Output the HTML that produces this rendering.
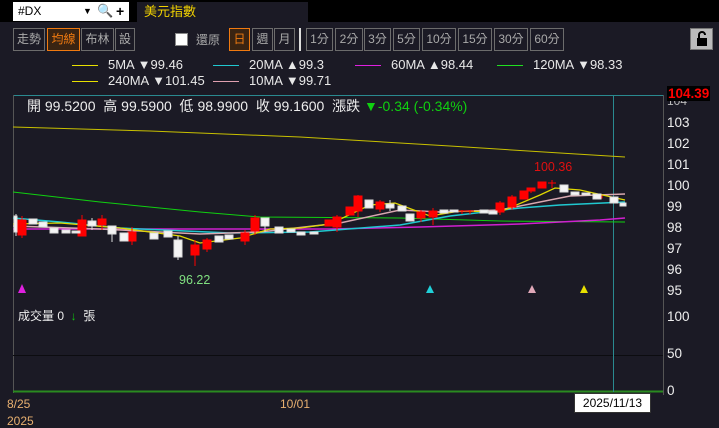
<!DOCTYPE html>
<html><head><meta charset="utf-8"><style>
*{margin:0;padding:0;box-sizing:border-box}
body{width:719px;height:426px;background:#1b1a25;font-family:"Liberation Sans","Noto Sans CJK TC",sans-serif;position:relative;overflow:hidden;color:#ddd}
.a{position:absolute}
.btn{position:absolute;top:28px;height:23px;border:1px solid #6c6c6c;color:#aaa;font-size:12px;line-height:21px;text-align:center}
.on{border-color:#f07a10;background:#3a2412;color:#f07a10}
.lg{position:absolute;font-size:13px;color:#e8e8e8;white-space:nowrap}
.ln{display:inline-block;width:26px;height:1px;vertical-align:middle;margin-right:10px}
.ax{position:absolute;left:667px;font-size:13.5px;color:#eee}
</style></head><body>
<div class="a" style="left:0;top:0;width:719px;height:22px;background:#000"></div>
<div class="a" style="left:13px;top:2px;width:116px;height:19px;background:#fff;color:#000;font-size:12px;line-height:19px;padding-left:5px">#DX<span style="position:absolute;left:70px;font-size:9px">▼</span><span style="position:absolute;left:84px;top:-1px;font-size:13px">🔍</span><span style="position:absolute;left:103px;font-weight:bold;font-size:14px">+</span></div>
<div class="a" style="left:137px;top:2px;width:171px;height:20px;background:#1b1a25;color:#f2d200;font-size:13px;line-height:20px;padding-left:7px">美元指數</div>

<div class="btn" style="left:13px;width:32px">走勢</div>
<div class="btn on" style="left:47px;width:33px">均線</div>
<div class="btn" style="left:81px;width:33px">布林</div>
<div class="btn" style="left:115px;width:20px">設</div>
<div class="a" style="left:175px;top:33px;width:13px;height:13px;background:#fff;border:1px solid #888"></div>
<div class="a" style="left:196px;top:31px;font-size:12px;color:#aaa">還原</div>
<div class="btn on" style="left:229px;width:21px">日</div>
<div class="btn" style="left:252px;width:21px">週</div>
<div class="btn" style="left:274px;width:21px">月</div>
<div class="a" style="left:299px;top:28px;width:2px;height:23px;background:#ddd"></div>
<div class="btn" style="left:306px;width:27px">1分</div>
<div class="btn" style="left:335px;width:28px">2分</div>
<div class="btn" style="left:364px;width:27px">3分</div>
<div class="btn" style="left:393px;width:27px">5分</div>
<div class="btn" style="left:422px;width:34px">10分</div>
<div class="btn" style="left:458px;width:34px">15分</div>
<div class="btn" style="left:494px;width:34px">30分</div>
<div class="btn" style="left:530px;width:34px">60分</div>
<div class="a" style="left:690px;top:28px;width:23px;height:22px;background:#bbb;border:1px solid #777"><svg width="21" height="20"><rect x="6" y="9" width="10" height="8" fill="#000"/><path d="M8 9V6a3 3 0 0 1 6 0" stroke="#000" stroke-width="2" fill="none"/></svg></div>

<div class="lg" style="left:72px;top:57px"><span class="ln" style="background:#e8e000"></span>5MA ▼99.46</div>
<div class="lg" style="left:213px;top:57px"><span class="ln" style="background:#20c8d0"></span>20MA ▲99.3</div>
<div class="lg" style="left:355px;top:57px"><span class="ln" style="background:#e020e0"></span>60MA ▲98.44</div>
<div class="lg" style="left:497px;top:57px"><span class="ln" style="background:#20e020"></span>120MA ▼98.33</div>
<div class="lg" style="left:72px;top:73px"><span class="ln" style="background:#e8e000"></span>240MA ▼101.45</div>
<div class="lg" style="left:213px;top:73px"><span class="ln" style="background:#e0a0b0"></span>10MA ▼99.71</div>

<svg class="a" style="left:0;top:0" width="719" height="426">
<line x1="13" y1="95.5" x2="663" y2="95.5" stroke="#2a8a90"/>
<line x1="13.5" y1="95" x2="13.5" y2="393" stroke="#555"/>
<line x1="663.5" y1="95" x2="663.5" y2="395" stroke="#555"/>
<line x1="13" y1="355.5" x2="663" y2="355.5" stroke="#0c0c10"/>
<line x1="13" y1="391.5" x2="663" y2="391.5" stroke="#2a8a20" stroke-width="2"/>
<line x1="613.5" y1="95" x2="613.5" y2="392" stroke="#2a8a90"/>
<path d="M13 127 L150 131 L300 137 L450 146 L560 153 L625 157" stroke="#c8c000" fill="none"/>
<path d="M13 192 L100 202 L200 212 L260 217 L400 218 L500 221 L625 222" stroke="#10d010" fill="none"/>
<path d="M13 229 L200 229 L330 229 L420 227 L520 224 L600 220 L625 218" stroke="#d020d0" fill="none" stroke-width="1.5"/>
<path d="M13 218 L60 222 L120 228 L230 233 L310 232 L400 225 L450 216 L520 208 L560 205 L625 202" stroke="#20c8d0" fill="none" stroke-width="1.5"/>
<path d="M13 226 L100 229 L200 234 L260 232 L340 223 L400 210 L440 212 L500 210 L570 196 L625 194" stroke="#d8a8b0" fill="none" stroke-width="1.5"/>
<path d="M13 224 L60 223 L120 228 L180 236 L200 243 L240 238 L270 229 L300 228 L330 224 L370 205 L395 203 L430 216 L460 211 L500 212 L540 195 L555 188 L580 190 L625 200" stroke="#e0d800" fill="none" stroke-width="1.3"/>
<g stroke-width="1">
<g fill="#f00" stroke="#f00">
<line x1="22" y1="216" x2="22" y2="238"/><rect x="18" y="220" width="8" height="15"/>
<line x1="82" y1="215" x2="82" y2="235"/><rect x="78" y="220" width="8" height="16"/>
<line x1="102" y1="215" x2="102" y2="230"/><rect x="98" y="219" width="8" height="6"/>
<line x1="132" y1="227" x2="132" y2="245"/><rect x="128" y="232" width="8" height="9"/>
<line x1="195" y1="240" x2="195" y2="266"/><rect x="191" y="245" width="8" height="10"/>
<line x1="207" y1="238" x2="207" y2="252"/><rect x="203" y="240" width="8" height="9"/>
<line x1="245" y1="230" x2="245" y2="245"/><rect x="241" y="233" width="8" height="8"/>
<line x1="255" y1="215" x2="255" y2="235"/><rect x="251" y="218" width="8" height="13"/>
<rect x="325" y="220" width="8" height="6"/>
<line x1="337" y1="215" x2="337" y2="232"/><rect x="333" y="217" width="8" height="10"/>
<rect x="346" y="207" width="8" height="8"/>
<line x1="358" y1="195" x2="358" y2="217"/><rect x="354" y="196" width="8" height="15"/>
<line x1="380" y1="200" x2="380" y2="212"/><rect x="376" y="202" width="8" height="7"/>
<line x1="421" y1="210" x2="421" y2="222"/><rect x="417" y="212" width="8" height="6"/>
<line x1="433" y1="208" x2="433" y2="225"/><rect x="429" y="211" width="8" height="6"/>
<line x1="462" y1="210" x2="462" y2="214"/><line x1="458" y1="211" x2="466" y2="211"/>
<line x1="470" y1="210" x2="470" y2="214"/><line x1="466" y1="211" x2="474" y2="211"/>
<line x1="500" y1="201" x2="500" y2="215"/><rect x="496" y="203" width="8" height="9"/>
<line x1="512" y1="195" x2="512" y2="210"/><rect x="508" y="197" width="8" height="10"/>
<rect x="520" y="191" width="8" height="8"/>
<line x1="531" y1="188" x2="531" y2="193"/><rect x="527" y="188" width="8" height="3"/>
<rect x="538" y="182" width="8" height="6"/>
<line x1="552" y1="180" x2="552" y2="188"/><line x1="548" y1="183" x2="556" y2="183"/>
<rect x="594" y="196" width="8" height="2"/>
</g>
<g fill="#f4f4f4" stroke="#ddd">
<line x1="16" y1="214" x2="16" y2="236"/><rect x="14" y="216" width="3" height="16"/>
<rect x="29" y="219" width="8" height="5"/>
<rect x="39" y="222" width="8" height="5"/>
<rect x="50" y="228" width="8" height="5"/>
<rect x="62" y="230" width="8" height="3"/>
<rect x="72" y="231" width="8" height="2"/>
<line x1="92" y1="218" x2="92" y2="230"/><rect x="88" y="221" width="8" height="5"/>
<line x1="112" y1="226" x2="112" y2="242"/><rect x="108" y="226" width="8" height="8"/>
<rect x="120" y="233" width="8" height="8"/>
<rect x="150" y="233" width="8" height="6"/>
<rect x="164" y="231" width="8" height="6"/>
<line x1="178" y1="236" x2="178" y2="260"/><rect x="174" y="240" width="8" height="17"/>
<rect x="215" y="236" width="8" height="6"/>
<rect x="225" y="235" width="8" height="4"/>
<line x1="265" y1="218" x2="265" y2="232"/><rect x="261" y="218" width="8" height="8"/>
<rect x="275" y="227" width="8" height="6"/>
<rect x="287" y="229" width="8" height="3"/>
<rect x="297" y="232" width="8" height="3"/>
<rect x="310" y="232" width="8" height="2"/>
<rect x="365" y="200" width="8" height="8"/>
<line x1="390" y1="200" x2="390" y2="211"/><rect x="386" y="204" width="8" height="4"/>
<rect x="398" y="206" width="8" height="5"/>
<rect x="406" y="214" width="8" height="7"/>
<rect x="440" y="210" width="8" height="3"/>
<rect x="450" y="210" width="8" height="2"/>
<rect x="480" y="210" width="8" height="3"/>
<rect x="489" y="211" width="8" height="3"/>
<rect x="560" y="185" width="8" height="7"/>
<rect x="571" y="192" width="8" height="3"/>
<rect x="582" y="193" width="8" height="2"/>
<rect x="593" y="194" width="8" height="5"/>
<rect x="610" y="197" width="8" height="6"/>
<rect x="620" y="203" width="6" height="3"/>
</g></g>
<polygon points="22,284 18,293 26,293" fill="#e020e0"/>
<polygon points="430,285 426,293 434,293" fill="#20d0d8"/>
<polygon points="532,285 528,293 536,293" fill="#e0a8b8"/>
<polygon points="584,285 580,293 588,293" fill="#e8e000"/>
</svg>

<div class="a" style="left:27px;top:96px;font-size:14px;color:#eee;white-space:nowrap">開 99.5200&nbsp; 高 99.5900&nbsp; 低 98.9900&nbsp; 收 99.1600&nbsp; 漲跌 <span style="color:#10d010">▼-0.34 (-0.34%)</span></div>
<div class="a" style="left:534px;top:160px;font-size:12.5px;color:#e01010">100.36</div>
<div class="a" style="left:179px;top:273px;font-size:12.5px;color:#80e080">96.22</div>
<div class="a" style="left:18px;top:307px;font-size:12px;color:#eee">成交量 0 <span style="color:#10c010">&nbsp;↓&nbsp;</span> 張</div>

<div class="ax" style="top:94px;font-size:12px;color:#bbb">104</div>
<div class="a" style="left:667px;top:86px;background:#000;color:#f00;font-weight:bold;font-size:13.5px;padding:0 1px">104.39</div>
<div class="ax" style="top:115px">103</div>
<div class="ax" style="top:136px">102</div>
<div class="ax" style="top:157px">101</div>
<div class="ax" style="top:178px">100</div>
<div class="ax" style="top:199px">99</div>
<div class="ax" style="top:220px">98</div>
<div class="ax" style="top:241px">97</div>
<div class="ax" style="top:262px">96</div>
<div class="ax" style="top:283px">95</div>
<div class="ax" style="top:309px">100</div>
<div class="ax" style="top:346px">50</div>
<div class="ax" style="top:383px">0</div>
<div class="a" style="left:7px;top:397px;font-size:12px;color:#e8b070">8/25</div>
<div class="a" style="left:7px;top:414px;font-size:12px;color:#e8b070">2025</div>
<div class="a" style="left:280px;top:397px;font-size:12px;color:#e8b070">10/01</div>
<div class="a" style="left:574px;top:393px;width:77px;height:20px;background:#fff;border:1px solid #333;color:#000;font-size:12px;line-height:18px;text-align:center">2025/11/13</div>
</body></html>
